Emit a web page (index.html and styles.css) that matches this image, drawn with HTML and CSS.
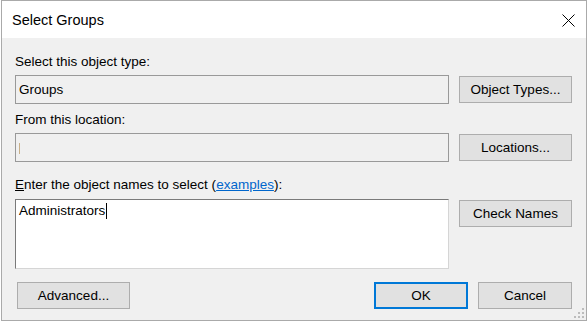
FILE: index.html
```html
<!DOCTYPE html>
<html lang="en">
<head>
    <meta charset="UTF-8">
    <title>Select Groups</title>
    <link rel="stylesheet" href="styles.css">
</head>
<body>
    <div class="dialog">
        <div class="title-bar">
            <span class="title">Select Groups</span>
            <svg class="close" width="13" height="13" viewBox="0 0 13 13">
                <path d="M0.5 0.5 L12.5 12.5 M12.5 0.5 L0.5 12.5" stroke="#000" stroke-width="1" fill="none"/>
            </svg>
        </div>

        <div class="content">
            <div class="label first">Select this object type:</div>
            <div class="spacer"></div>
            <div class="field">Groups</div>
            <button class="btn btn-side">Object Types...</button>

            <div class="label">From this location:</div>
            <div class="spacer"></div>
            <div class="field"><span class="caret faint"></span></div>
            <button class="btn btn-side">Locations...</button>

            <div class="label third"><u>E</u>nter the object names to select (<a href="#" class="link">examples</a>):</div>
            <div class="spacer"></div>
            <div class="names">Administrators<span class="caret"></span></div>
            <button class="btn btn-side btn-top">Check Names</button>
        </div>

        <div class="footer">
            <button class="btn btn-advanced">Advanced...</button>
            <div class="footer-right">
                <button class="btn btn-default">OK</button>
                <button class="btn btn-cancel">Cancel</button>
            </div>
        </div>

        <svg class="grip" width="12" height="12" viewBox="0 0 12 12">
            <rect x="9" y="1" width="2" height="2" fill="#bcbcbc"/>
            <rect x="5" y="5" width="2" height="2" fill="#bcbcbc"/>
            <rect x="9" y="5" width="2" height="2" fill="#bcbcbc"/>
            <rect x="1" y="9" width="2" height="2" fill="#bcbcbc"/>
            <rect x="5" y="9" width="2" height="2" fill="#bcbcbc"/>
            <rect x="9" y="9" width="2" height="2" fill="#bcbcbc"/>
        </svg>
    </div>
</body>
</html>
```

FILE: styles.css
```css
* {
    margin: 0;
    padding: 0;
    box-sizing: border-box;
    font-family: 'Liberation Sans', Arial, sans-serif;
}

body {
    background-color: #ffffff;
    width: 588px;
    height: 322px;
    overflow: hidden;
}

.dialog {
    position: relative;
    width: 586px;
    height: 321px;
    margin-left: 1px;
    border: 1px solid #aaaaaa;
    background-color: #f0f0f0;
    color: #000000;
    font-size: 13.5px;
}

.title-bar {
    height: 37px;
    background-color: #ffffff;
    display: flex;
    align-items: center;
    justify-content: space-between;
    padding: 0 11px 0 10px;
}

.title {
    font-size: 14.5px;
    line-height: 18px;
    margin-top: 1px;
}

.close {
    display: block;
    margin-top: 1px;
}

/* Main form area */
.content {
    display: grid;
    grid-template-columns: 434px 113px;
    column-gap: 10px;
    padding: 0 14px 0 13px;
}

.label {
    line-height: 16px;
    height: 16px;
    margin-top: 8px;
    margin-bottom: 5px;
    white-space: nowrap;
}

.label.first {
    margin-top: 16px;
}

.label.third {
    margin-top: 15px;
    margin-bottom: 6px;
}

.link {
    color: #0066cc;
}

.field {
    height: 29px;
    border: 1px solid #999999;
    background-color: #f0f0f0;
    padding: 0 3px;
    line-height: 27px;
    display: flex;
    align-items: center;
}

.names {
    height: 70px;
    background-color: #ffffff;
    border: 1px solid;
    border-color: #7a7a7a #d5d5d5 #d5d5d5 #7a7a7a;
    padding: 3px 3px;
    line-height: 16px;
}

.caret {
    display: inline-block;
    width: 1px;
    height: 16px;
    background-color: #000000;
    vertical-align: -4px;
    margin-left: 1px;
}

.caret.faint {
    height: 11px;
    margin-left: 0;
    margin-top: 1px;
    background-color: #c9b089;
}

/* Buttons */
.btn {
    height: 27px;
    background-color: #e1e1e1;
    border: 1px solid #adadad;
    color: #000000;
    font-size: 13.5px;
}

.btn-side {
    width: 113px;
    align-self: center;
}

.btn-top {
    align-self: start;
    margin-top: 1px;
}

.footer {
    display: flex;
    justify-content: space-between;
    padding: 13px 14px 0 15px;
}

.footer-right {
    display: flex;
    gap: 10px;
}

.btn-advanced {
    width: 113px;
}

.btn-default {
    width: 94px;
    border: 2px solid #0078d7;
}

.btn-cancel {
    width: 94px;
}

.grip {
    position: absolute;
    right: 1px;
    bottom: 1px;
}
```
